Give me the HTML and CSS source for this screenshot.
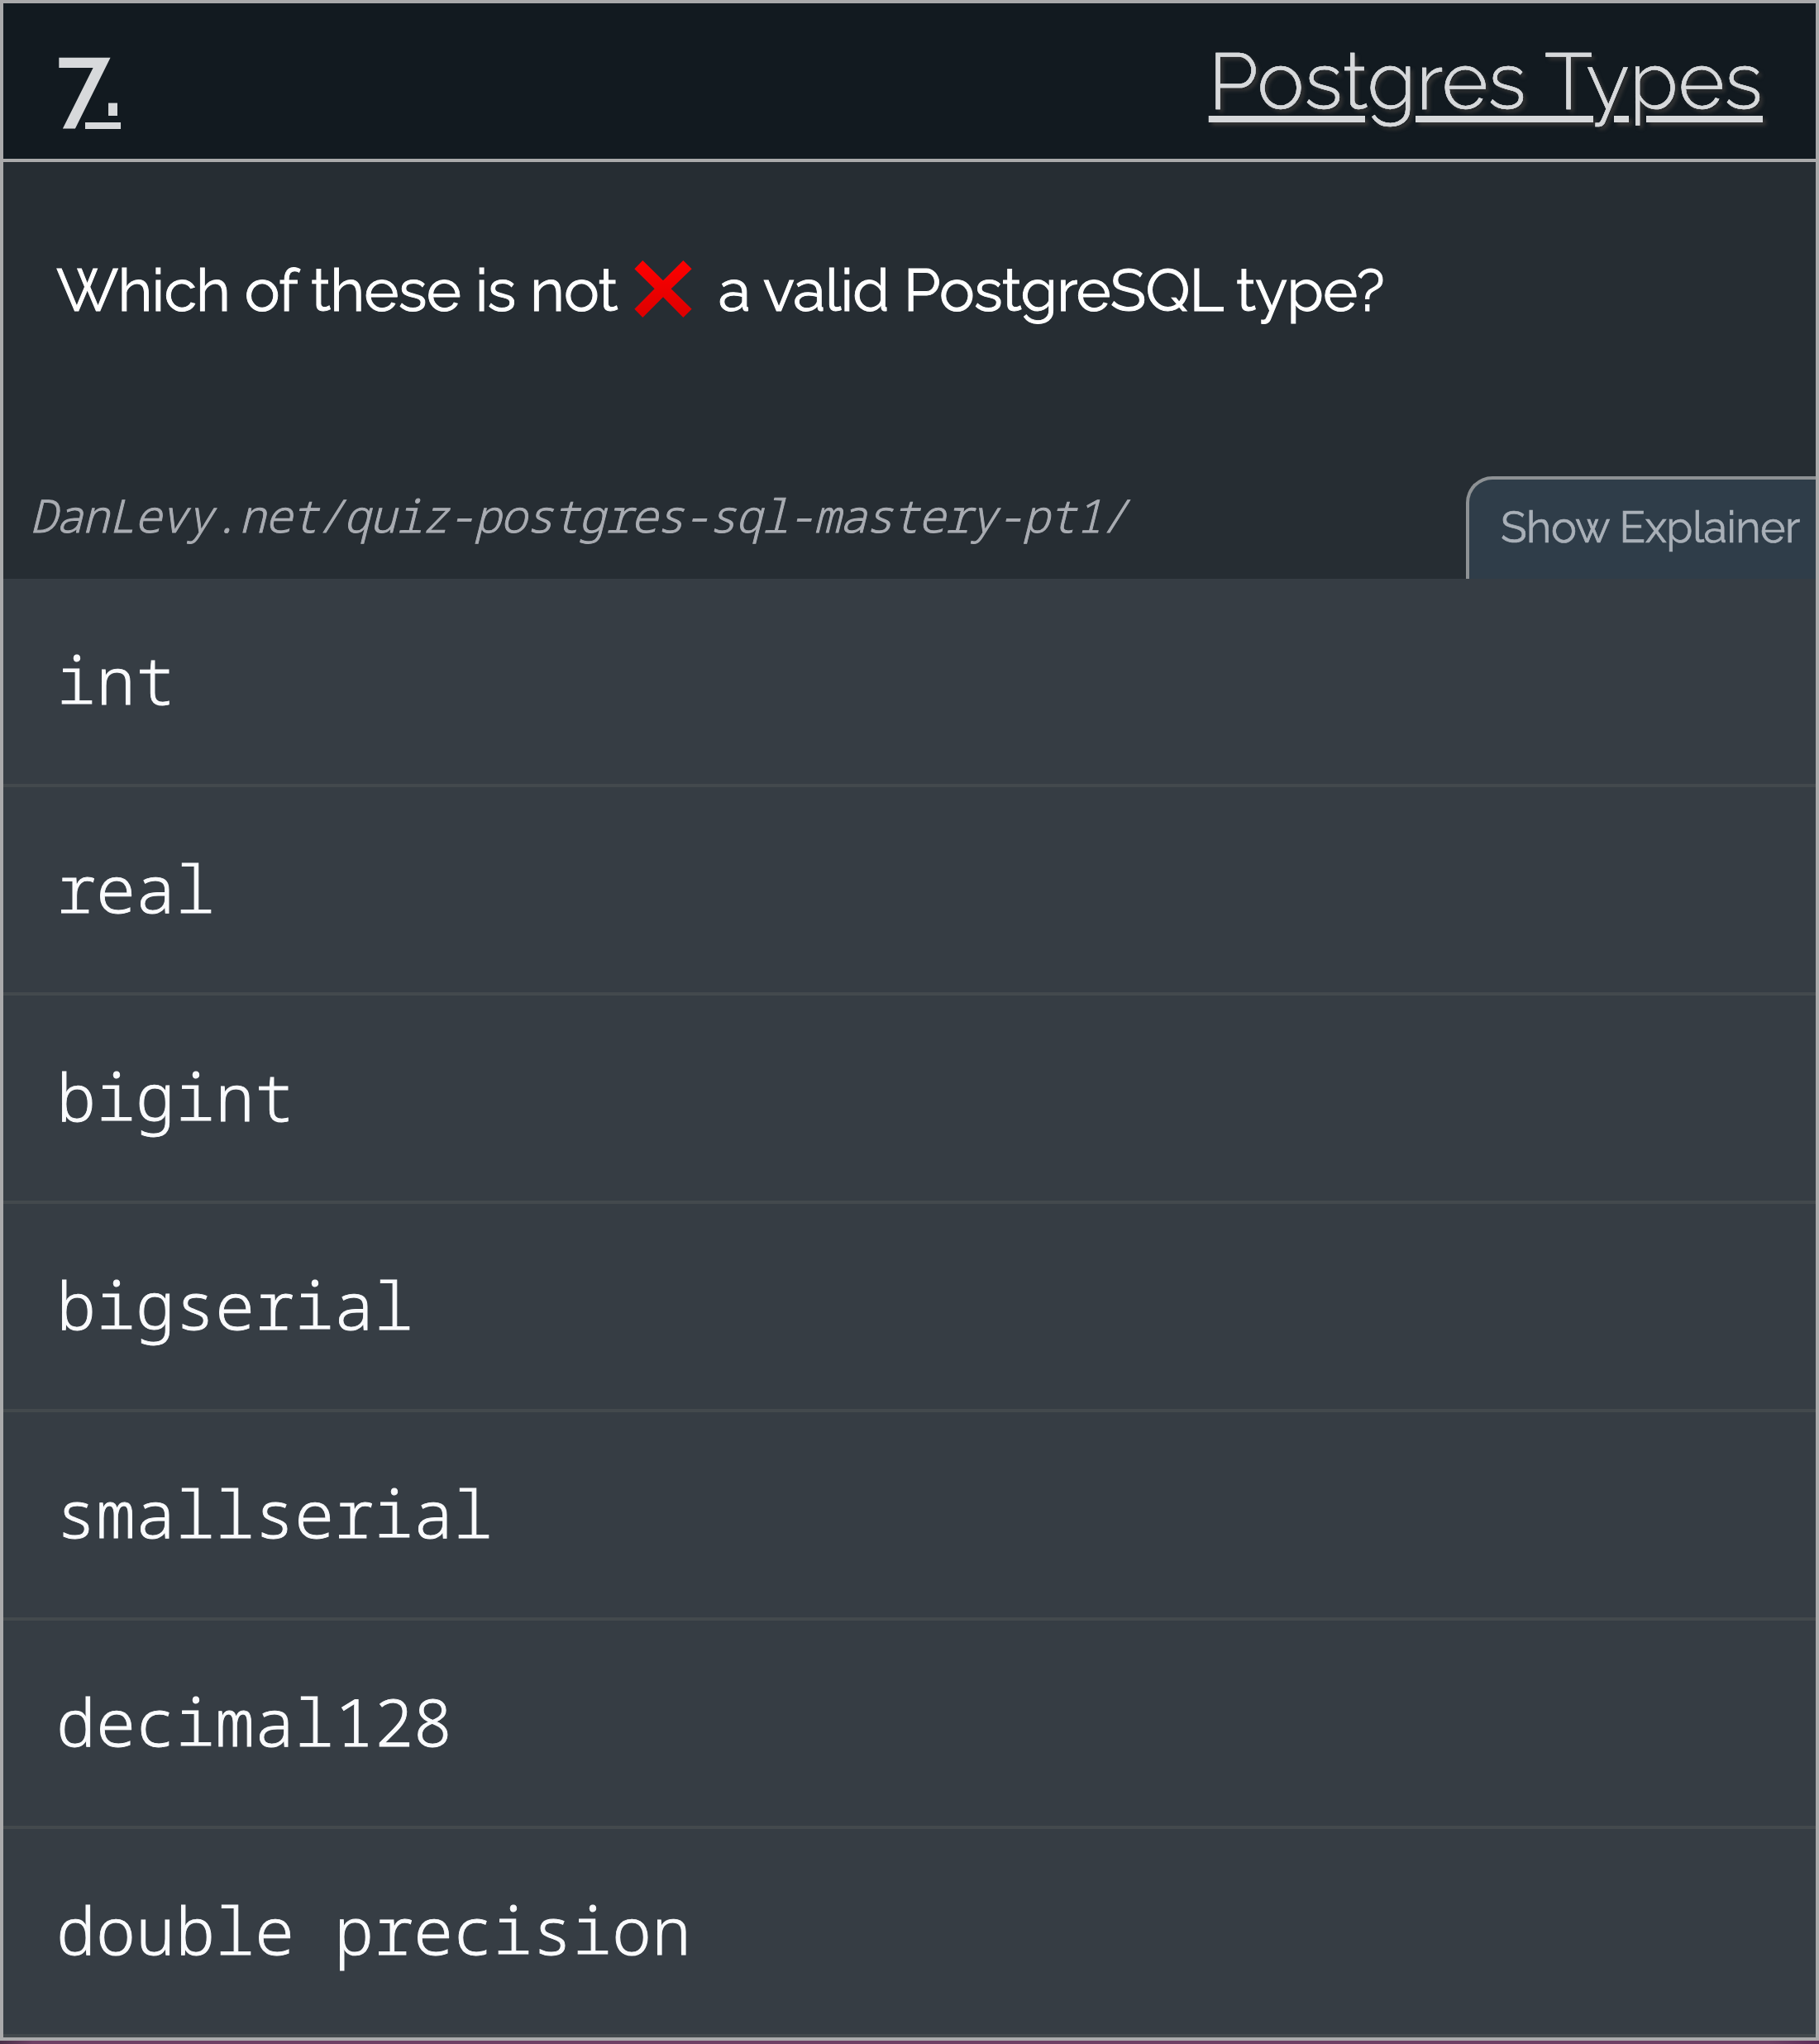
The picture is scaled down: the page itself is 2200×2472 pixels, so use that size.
FILE: index.html
```
<!DOCTYPE html>
<html lang="en">
<head>
<meta charset="utf-8">
<title>Postgres Types</title>
<link rel="stylesheet" href="styles.css">
</head>
<body>
<main class="card">
  <header class="card-header">
    <span class="number">7.</span>
    <h1 class="title">Postgres Types</h1>
  </header>
  <section class="prompt">
    <p class="question">
      <span>Which of these is not</span>
      <svg class="cross" viewBox="0 0 208 207" aria-hidden="true">
        <defs><linearGradient id="red" x1="0" y1="0" x2="0" y2="1"><stop offset="0" stop-color="#ff0000"/><stop offset="1" stop-color="#dc0000"/></linearGradient></defs>
        <path fill="url(#red)" d="M30 0 104 73 177 0 208 31 133 103 208 176 177 207 104 133 30 207 0 176 73 103 0 31Z"/>
      </svg>
      <span>a valid PostgreSQL type?</span>
    </p>
    <div class="prompt-footer">
      <span class="source">DanLevy.net/quiz-postgres-sql-mastery-pt1/</span>
      <button class="explainer" type="button">Show Explainer</button>
    </div>
  </section>
  <ul class="answers">
    <li class="answer">int</li>
    <li class="answer">real</li>
    <li class="answer">bigint</li>
    <li class="answer">bigserial</li>
    <li class="answer">smallserial</li>
    <li class="answer">decimal128</li>
    <li class="answer">double precision</li>
  </ul>
</main>
</body>
</html>
```
FILE: styles.css
```
* {
  box-sizing: border-box;
}

body {
  margin: 0;
  height: 2472px;
  overflow: hidden;
  background: linear-gradient(90deg, #4a3048 0, #6e4065 40px, #6e4065 2140px, #5c2c58 2200px);
  font-family: Raleway, Lato, sans-serif;
}

.card {
  width: 2200px;
  height: 2468px;
  border: 4px solid #aaaaab;
  background: #363d44;
}

.card-header {
  display: flex;
  align-items: center;
  justify-content: space-between;
  height: 192px;
  padding: 0 64px;
  border-bottom: 4px solid #aaaaab;
  background: #121a20;
  color: #d7d9db;
}

.number {
  padding-bottom: 2px;
  font-size: 120px;
  font-weight: 600;
  letter-spacing: -3px;
  text-decoration: underline;
  text-decoration-thickness: 8px;
  text-underline-offset: 8px;
  /* trims the underline sliver left of the 7 */
  clip-path: inset(0 0 0 2px);
}

.title {
  margin: 0;
  font-size: 96px;
  font-weight: 300;
  letter-spacing: 0.18px;
  -webkit-text-stroke: 0.5px #d7d9db;
  text-decoration: underline;
  text-decoration-thickness: 8px;
  text-underline-offset: 8px;
  text-shadow: 4px 4px 4px #333333;
}

.prompt {
  display: flex;
  flex-direction: column;
  justify-content: space-between;
  height: 504px;
  padding-top: 112px;
  background: #262d33;
}

.question {
  display: flex;
  margin: 0;
  padding-left: 64px;
  color: #ffffff;
  font-size: 72px;
  font-weight: 400;
  letter-spacing: -0.85px;
  -webkit-text-stroke: 0.9px #ffffff;
  white-space: nowrap;
}

.cross {
  flex: none;
  width: 70px;
  height: 69px;
  margin: 7px 32px 0 20px;
}

.prompt-footer {
  display: flex;
  align-items: flex-end;
  justify-content: space-between;
  height: 124px;
}

.source {
  padding: 0 0 40px 32px;
  color: #a9acb2;
  font: italic 300 55px "Noto Sans Mono", "DejaVu Sans Mono", monospace;
  letter-spacing: -1.4px;
  -webkit-text-stroke: 0.9px #a9acb2;
}

.explainer {
  width: 423px;
  height: 124px;
  padding: 27px 0 0 38px;
  border: solid #8d9194;
  border-width: 4px 0 0 4px;
  border-radius: 32px 0 0 0;
  background: #2f3d49;
  color: #a9b0b8;
  display: flex;
  align-items: flex-start;
  font: 400 52px Raleway, Lato, sans-serif;
  letter-spacing: -0.5px;
  -webkit-text-stroke: 0.7px #a9b0b8;
  white-space: nowrap;
}

.answers {
  margin: 0;
  padding: 0;
  list-style: none;
}

.answer {
  display: flex;
  align-items: center;
  height: 252px;
  padding: 0 64px 8px;
  border-bottom: 4px solid #43494d;
  color: #fafbfd;
  font: 300 80px "Noto Sans Mono", "DejaVu Sans Mono", monospace;
  -webkit-text-stroke: 0.9px #fafbfd;
}
```
